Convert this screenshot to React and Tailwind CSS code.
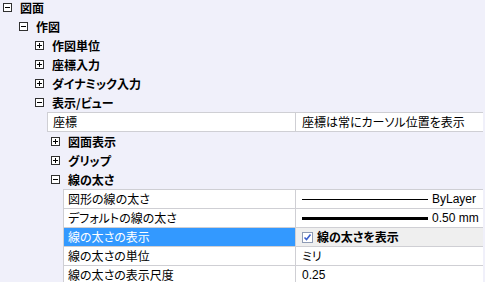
import React from "react";

const FONT = "[font-family:'Noto_Sans_CJK_JP','Liberation_Sans',sans-serif] [font-feature-settings:'palt']";

function ToggleBox({ open }) {
  return (
    <span className="relative w-[9px] h-[9px] border border-[#303030] bg-white shrink-0">
      <span className="absolute left-[1px] top-[3px] w-[5px] h-px bg-black" />
      {!open && <span className="absolute left-[3px] top-[1px] w-px h-[5px] bg-black" />}
    </span>
  );
}

function Node({ indent, open, label }) {
  return (
    <div className={`flex items-center h-[19px] gap-2 ${indent}`}>
      <ToggleBox open={open} />
      <span className="font-bold text-[12px] leading-none text-black">{label}</span>
    </div>
  );
}

function PropRow({ indent = "", name, selected, children, pad = "pl-[4px]" }) {
  return (
    <div className={`flex h-[19px] border-b border-[#cfcfd4] ${indent}`}>
      <div
        className={`flex items-center w-full border-l border-[#cfcfd4] ${
          selected ? "bg-[#3399ff] text-white" : "bg-white text-black"
        }`}
      >
        <span className={`text-[12px] leading-none ${pad}`}>{name}</span>
      </div>
      <div
        className={`flex items-center w-[188px] shrink-0 border-l border-[#cfcfd4] pl-[6px] pr-[2px] text-[12px] leading-none text-black ${
          selected ? "bg-[#efefef]" : "bg-white"
        }`}
      >
        {children}
      </div>
    </div>
  );
}

function LineValue({ thick, label }) {
  return (
    <div className="flex items-center w-full">
      <span className={`w-[126px] bg-black ${thick ? "h-[3px]" : "h-px"}`} />
      <span className="ml-[4px] [font-family:'Liberation_Sans',sans-serif] text-[12px]">{label}</span>
    </div>
  );
}

export default function App() {
  return (
    <div className={`w-[485px] h-[282px] overflow-hidden bg-[#f0f0fa] ${FONT}`}>
      <div className="w-[483px] -mt-[2px] flex flex-col">
        <Node indent="pl-[3px]" open label="図面" />
        <Node indent="pl-[19px]" open label="作図" />
        <Node indent="pl-[35px]" label="作図単位" />
        <Node indent="pl-[35px]" label="座標入力" />
        <Node indent="pl-[35px]" label="ダイナミック入力" />
        <Node indent="pl-[35px]" open label="表示/ビュー" />
        <div className="border-t border-[#cfcfd4] ml-[47px]" />
        <PropRow indent="ml-[47px]" name="座標" pad="pl-[5px]">
          座標は常にカーソル位置を表示
        </PropRow>
        <Node indent="pl-[51px]" label="図面表示" />
        <Node indent="pl-[51px]" label="グリップ" />
        <Node indent="pl-[51px]" open label="線の太さ" />
        <div className="ml-[63px] border-t border-[#cfcfd4]" />
        <div className="ml-[63px] flex flex-col">
          <PropRow name="図形の線の太さ">
            <LineValue label="ByLayer" />
          </PropRow>
          <PropRow name="デフォルトの線の太さ">
            <LineValue thick label="0.50 mm" />
          </PropRow>
          <PropRow name="線の太さの表示" selected>
            <span className="relative w-[11px] h-[11px] border border-[#8e9bb5] bg-white shrink-0">
              <svg className="absolute left-0 top-0" width="9" height="9" viewBox="0 0 9 9">
                <path d="M1.5 4.5 L3.5 6.5 L7.5 1.5" stroke="#3a5fcd" strokeWidth="1.6" fill="none" />
              </svg>
            </span>
            <span className="ml-[4px] font-bold">線の太さを表示</span>
          </PropRow>
          <PropRow name="線の太さの単位">ミリ</PropRow>
          <PropRow name="線の太さの表示尺度">
            <span className="[font-family:'Liberation_Sans',sans-serif]">0.25</span>
          </PropRow>
        </div>
      </div>
    </div>
  );
}
